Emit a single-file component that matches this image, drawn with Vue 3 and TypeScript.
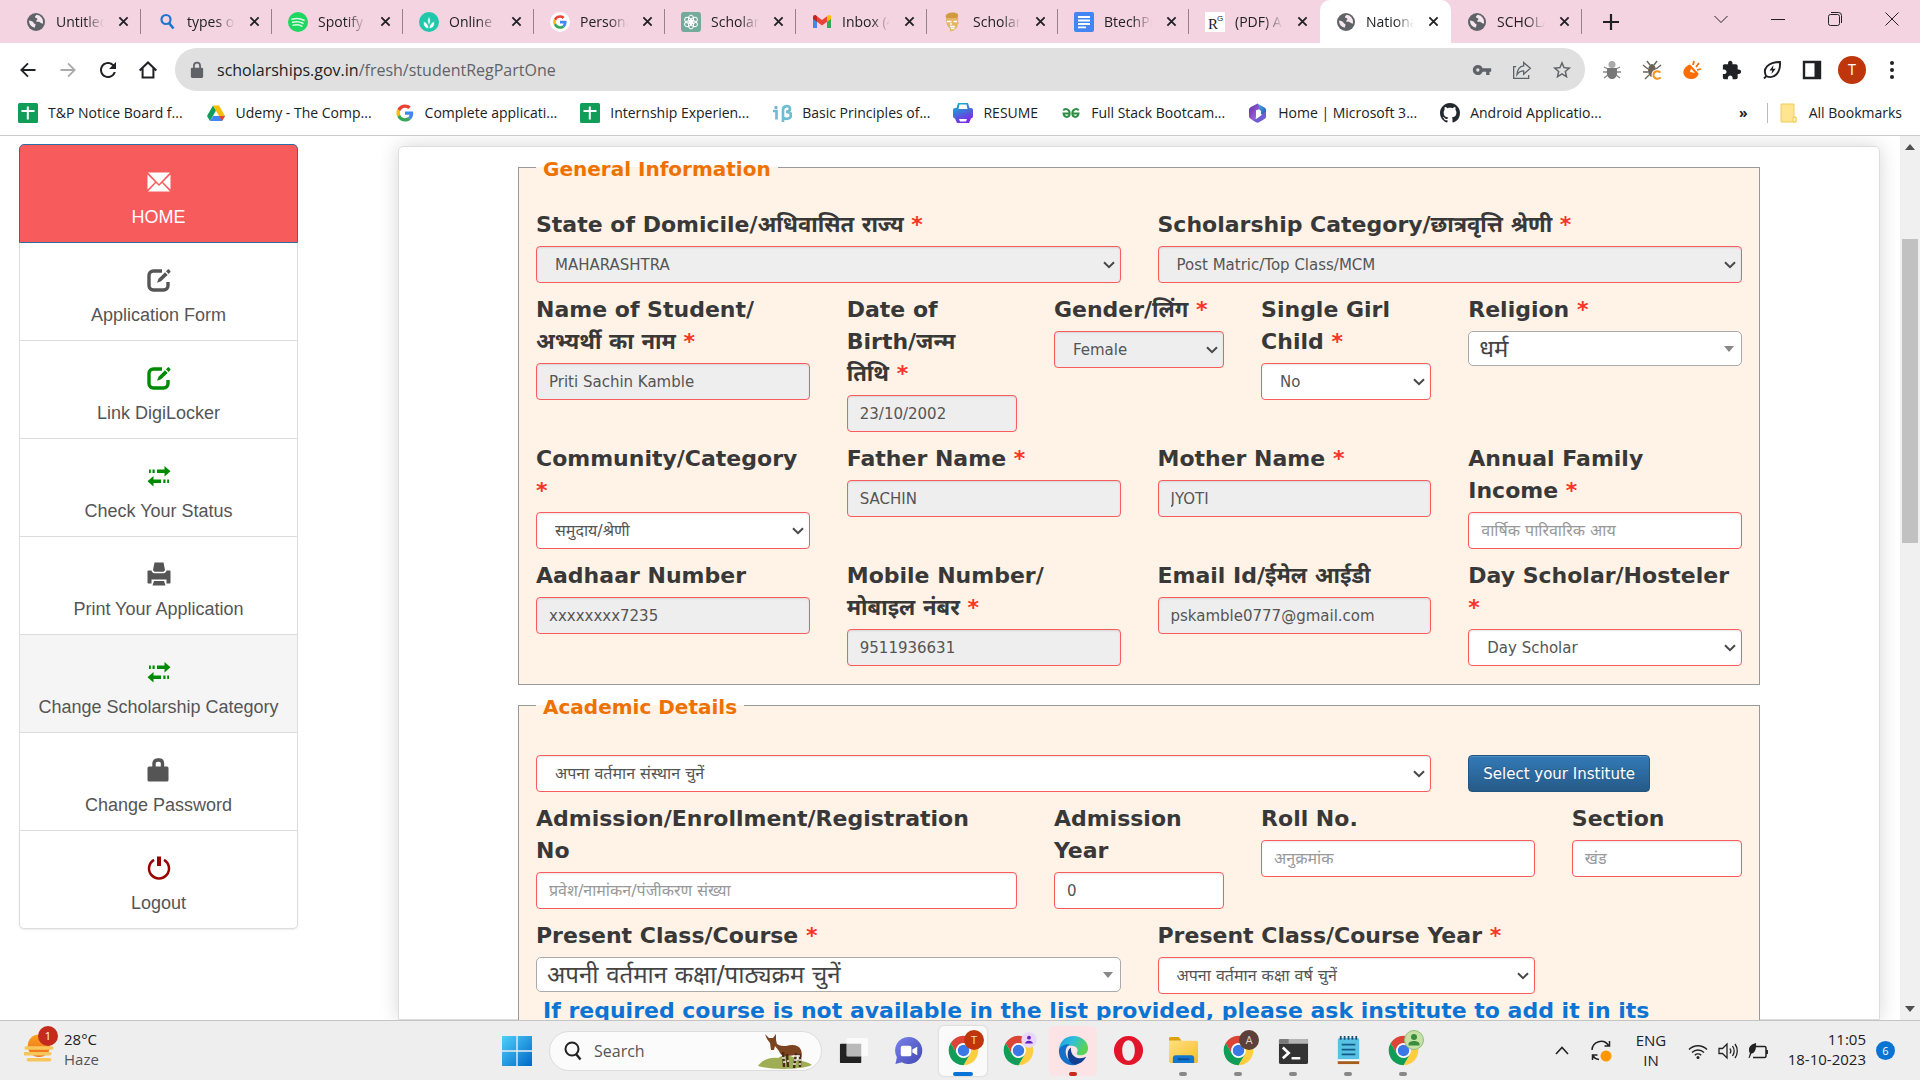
<script setup lang="ts">
interface Tab { title: string; icon: string; active?: boolean }
interface Shortcut { title: string; icon: string }
interface MenuItem { title: string; icon: string; tone: string }
interface Field {
  id: string
  label?: string
  kind: 'input' | 'select' | 'picker' | 'button'
  span: number
  value?: string
  hint?: string
  required?: boolean
  locked?: boolean
}
interface TaskApp { name: string; icon: string; state?: string; badge?: string }

const tabs: Tab[] = [
  { title: 'Untitled', icon: 'globe' },
  { title: 'types of', icon: 'lens' },
  { title: 'Spotify -', icon: 'spotify' },
  { title: 'Online C', icon: 'leafdot' },
  { title: 'Persona', icon: 'google-disc' },
  { title: 'Scholar', icon: 'gpt' },
  { title: 'Inbox (4', icon: 'gmail' },
  { title: 'Scholar', icon: 'sage' },
  { title: 'BtechPr', icon: 'docs' },
  { title: '(PDF) A', icon: 'rg' },
  { title: 'Nationa', icon: 'globe', active: true },
  { title: 'SCHOLA', icon: 'globe' },
]

const shortcuts: Shortcut[] = [
  { title: 'T&P Notice Board f...', icon: 'sheets' },
  { title: 'Udemy - The Comp...', icon: 'drive' },
  { title: 'Complete applicati...', icon: 'google' },
  { title: 'Internship Experien...', icon: 'sheets' },
  { title: 'Basic Principles of...', icon: 'beta' },
  { title: 'RESUME', icon: 'resume' },
  { title: 'Full Stack Bootcam...', icon: 'gfg' },
  { title: 'Home | Microsoft 3...', icon: 'm365' },
  { title: 'Android Applicatio...', icon: 'github' },
]

const extensions: string[] = ['bug', 'beetle', 'plug', 'puzzle', 'saver', 'panel']

const menu: MenuItem[] = [
  { title: 'HOME', icon: 'envelope', tone: 'home' },
  { title: 'Application Form', icon: 'edit', tone: 'grey' },
  { title: 'Link DigiLocker', icon: 'edit', tone: 'green' },
  { title: 'Check Your Status', icon: 'transfer', tone: 'green' },
  { title: 'Print Your Application', icon: 'print', tone: 'grey' },
  { title: 'Change Scholarship Category', icon: 'transfer', tone: 'green hovered' },
  { title: 'Change Password', icon: 'padlock', tone: 'grey' },
  { title: 'Logout', icon: 'power', tone: 'dark-red' },
]

const generalRows: Field[][] = [
  [
    { id: 'state', label: 'State of Domicile/अधिवासित राज्य', kind: 'select', span: 6, value: 'MAHARASHTRA', required: true, locked: true },
    { id: 'scheme', label: 'Scholarship Category/छात्रवृत्ति श्रेणी', kind: 'select', span: 6, value: 'Post Matric/Top Class/MCM', required: true, locked: true },
  ],
  [
    { id: 'student', label: 'Name of Student/\nअभ्यर्थी का नाम', kind: 'input', span: 3, value: 'Priti Sachin Kamble', required: true, locked: true },
    { id: 'dob', label: 'Date of\nBirth/जन्म\nतिथि', kind: 'input', span: 2, value: '23/10/2002', required: true, locked: true },
    { id: 'gender', label: 'Gender/लिंग', kind: 'select', span: 2, value: 'Female', required: true, locked: true },
    { id: 'girl', label: 'Single Girl\nChild', kind: 'select', span: 2, value: 'No', required: true },
    { id: 'religion', label: 'Religion', kind: 'picker', span: 3, value: 'धर्म', required: true },
  ],
  [
    { id: 'community', label: 'Community/Category', kind: 'select', span: 3, value: 'समुदाय/श्रेणी', required: true },
    { id: 'father', label: 'Father Name', kind: 'input', span: 3, value: 'SACHIN', required: true, locked: true },
    { id: 'mother', label: 'Mother Name', kind: 'input', span: 3, value: 'JYOTI', required: true, locked: true },
    { id: 'income', label: 'Annual Family\nIncome', kind: 'input', span: 3, hint: 'वार्षिक पारिवारिक आय', required: true },
  ],
  [
    { id: 'aadhaar', label: 'Aadhaar Number', kind: 'input', span: 3, value: 'xxxxxxxx7235', locked: true },
    { id: 'mobile', label: 'Mobile Number/\nमोबाइल नंबर', kind: 'input', span: 3, value: '9511936631', required: true, locked: true },
    { id: 'email', label: 'Email Id/ईमेल आईडी', kind: 'input', span: 3, value: 'pskamble0777@gmail.com', locked: true },
    { id: 'stay', label: 'Day Scholar/Hosteler', kind: 'select', span: 3, value: 'Day Scholar', required: true },
  ],
]

const academicRows: Field[][] = [
  [
    { id: 'institute', kind: 'select', span: 9, value: 'अपना वर्तमान संस्थान चुनें' },
    { id: 'pick', kind: 'button', span: 3, value: 'Select your Institute' },
  ],
  [
    { id: 'admission', label: 'Admission/Enrollment/Registration\nNo', kind: 'input', span: 5, hint: 'प्रवेश/नामांकन/पंजीकरण संख्या' },
    { id: 'year', label: 'Admission\nYear', kind: 'input', span: 2, value: '0' },
    { id: 'roll', label: 'Roll No.', kind: 'input', span: 3, hint: 'अनुक्रमांक' },
    { id: 'section', label: 'Section', kind: 'input', span: 2, hint: 'खंड' },
  ],
  [
    { id: 'course', label: 'Present Class/Course', kind: 'picker', span: 6, value: 'अपनी वर्तमान कक्षा/पाठ्यक्रम चुनें', required: true },
    { id: 'courseyear', label: 'Present Class/Course Year', kind: 'select', span: 4, value: 'अपना वर्तमान कक्षा वर्ष चुनें', required: true },
  ],
]

const sections = [
  { title: 'General Information', name: 'general', rows: generalRows, note: '' },
  { title: 'Academic Details', name: 'academic', rows: academicRows, note: 'If required course is not available in the list provided, please ask institute to add it in its' },
]

const isHindi = (f: Field): boolean => /[\u0900-\u097f]/.test((f.value ?? '') + (f.hint ?? ''))

const apps: TaskApp[] = [
  { name: 'Task view', icon: 'taskview' },
  { name: 'Chat', icon: 'chat' },
  { name: 'Chrome', icon: 'chrome', state: 'current', badge: 'badge-t' },
  { name: 'Chrome', icon: 'chrome', badge: 'badge-p' },
  { name: 'Edge', icon: 'edge', state: 'alert' },
  { name: 'Opera', icon: 'opera' },
  { name: 'Explorer', icon: 'explorer', state: 'open' },
  { name: 'Chrome', icon: 'chrome', state: 'open', badge: 'badge-a' },
  { name: 'Terminal', icon: 'terminal', state: 'open' },
  { name: 'Notepad', icon: 'notepad', state: 'open' },
  { name: 'Chrome', icon: 'chrome', state: 'open', badge: 'badge-g' },
]
</script>

<template>
  <div class="desktop">
    <svg class="sprite" aria-hidden="true">
      <defs>
        <linearGradient id="g-resume" x1="0" y1="0" x2="0.4" y2="1"><stop offset="0" stop-color="#00c4cc" /><stop offset="1" stop-color="#7d2ae8" /></linearGradient>
        <linearGradient id="g-m1" x1="0" y1="0" x2="1" y2="1"><stop offset="0" stop-color="#5b2ea6" /><stop offset="1" stop-color="#b977e8" /></linearGradient>
        <linearGradient id="g-m2" x1="0" y1="0" x2="1" y2="1"><stop offset="0" stop-color="#4fc3f7" /><stop offset="1" stop-color="#2848a8" /></linearGradient>
        <linearGradient id="g-win" x1="0" y1="0" x2="1" y2="1"><stop offset="0" stop-color="#4fd0fb" /><stop offset="1" stop-color="#0067c6" /></linearGradient>
        <linearGradient id="g-chat" x1="0" y1="0" x2="1" y2="1"><stop offset="0" stop-color="#7b83eb" /><stop offset="1" stop-color="#4147b5" /></linearGradient>
        <linearGradient id="g-edge" x1="0" y1="0" x2="1" y2="0.4"><stop offset="0" stop-color="#1b9de2" /><stop offset="0.5" stop-color="#30bfd8" /><stop offset="1" stop-color="#5bd352" /></linearGradient>
        <linearGradient id="g-sun" x1="0" y1="0" x2="0" y2="1"><stop offset="0" stop-color="#f9a11b" /><stop offset="1" stop-color="#ee6b1c" /></linearGradient>
        <linearGradient id="g-folder" x1="0" y1="0" x2="1" y2="1"><stop offset="0" stop-color="#ffe083" /><stop offset="1" stop-color="#f8bd26" /></linearGradient>
      </defs>
      <symbol id="globe" viewBox="0 0 20 20"><circle cx="10" cy="10" r="9" fill="#5f6368" /><path d="M3 8.500c2 .2 4 .8 4.500 2.200.3 1 1.700.8 2 1.800.3 1.300-.8 1.700-.7 3.200A7.300 7.300 0 0 1 3 8.500zM10.500 2.800c-.3 1-1.500 1-1.500 2.200 0 1.300 2.200.6 2.400 1.900.2 1.100-1.600 1.300-1.200 2.400.4 1 2 .2 3.300.7 1.400.5 1.300 1.700 3.600 1.400A7.300 7.300 0 0 0 10.500 2.800z" fill="#f6e6ee" /></symbol>
      <symbol id="lens" viewBox="0 0 20 20"><circle cx="9" cy="7.500" r="4.500" fill="none" stroke="#1976d2" stroke-width="2.200" /><path d="M12 11l4.500 5.500" stroke="#1976d2" stroke-width="2.600" /></symbol>
      <symbol id="spotify" viewBox="0 0 20 20"><circle cx="10" cy="10" r="10" fill="#1ed760" /><path d="M4 7.200c4-1.200 8.600-.8 12 1.100M4.600 10.300c3.600-1 7.300-.6 10.300 1M5.200 13.200c3-.8 6-.5 8.600.9" fill="none" stroke="#dff5e6" stroke-width="1.600" stroke-linecap="round" /></symbol>
      <symbol id="leafdot" viewBox="0 0 20 20"><circle cx="10" cy="10" r="10" fill="#1fc8aa" /><path d="M10 16.500c-4 0-6-3-5.500-7 3 .7 5 3 5.500 7zm0 0c4 0 6-3 5.500-7-3 .7-5 3-5.500 7zM10 13.500c-1.800-3.500-1.800-6 0-9 1.800 3 1.800 5.500 0 9z" fill="#fff" stroke="#1fc8aa" stroke-width=".7" /></symbol>
      <symbol id="google" viewBox="-4 -4 56 56"><path fill="#EA4335" d="M24 9.500c3.540 0 6.710 1.220 9.210 3.600l6.850-6.850C35.900 2.380 30.470 0 24 0 14.620 0 6.510 5.380 2.560 13.220l7.980 6.190C12.430 13.720 17.740 9.500 24 9.500z" /><path fill="#4285F4" d="M46.980 24.550c0-1.570-.15-3.090-.38-4.550H24v9.020h12.940c-.58 2.960-2.260 5.480-4.780 7.180l7.730 6c4.510-4.180 7.090-10.360 7.090-17.650z" /><path fill="#FBBC05" d="M10.530 28.590c-.48-1.450-.76-2.990-.76-4.590s.27-3.140.76-4.590l-7.980-6.190C.92 16.460 0 20.120 0 24c0 3.880.92 7.540 2.560 10.780l7.970-6.190z" /><path fill="#34A853" d="M24 48c6.480 0 11.930-2.130 15.890-5.810l-7.730-6c-2.150 1.450-4.920 2.300-8.160 2.300-6.260 0-11.570-4.220-13.470-9.910l-7.980 6.190C6.510 42.620 14.620 48 24 48z" /></symbol>
      <symbol id="google-disc" viewBox="0 0 20 20"><circle cx="10" cy="10" r="10" fill="#fff" /><use href="#google" x="2" y="2" width="16" height="16" /></symbol>
      <symbol id="gpt" viewBox="0 0 20 20"><rect width="20" height="20" rx="3" fill="#74aa9c" /><g fill="none" stroke="#fff" stroke-width="1"><ellipse cx="10" cy="7" rx="2.600" ry="4" /><ellipse cx="10" cy="7" rx="2.600" ry="4" transform="rotate(60 10 10)" /><ellipse cx="10" cy="7" rx="2.600" ry="4" transform="rotate(120 10 10)" /><ellipse cx="10" cy="7" rx="2.600" ry="4" transform="rotate(180 10 10)" /><ellipse cx="10" cy="7" rx="2.600" ry="4" transform="rotate(240 10 10)" /><ellipse cx="10" cy="7" rx="2.600" ry="4" transform="rotate(300 10 10)" /></g></symbol>
      <symbol id="gmail" viewBox="0 0 20 20"><path d="M1 5v11h4V8.800z" fill="#4285f4" /><path d="M19 5v11h-4V8.800z" fill="#34a853" /><path d="M15 4.500v5.300L19 7V5c0-2-2-2.600-3.200-1.600z" fill="#fbbc04" /><path d="M5 9.800V4.200L10 8l5-3.800v5.600L10 13.500z" fill="#ea4335" /><path d="M1 5v2l4 2.800V4.200l-.8-.8C3 2.400 1 3 1 5z" fill="#c5221f" /></symbol>
      <symbol id="sage" viewBox="0 0 20 20"><path d="M2.500 4.500C3 1.500 8 0 12 .8c3 .6 3.500 2 3 3.700L14.500 6H3.500z" fill="#d19a3e" /><path d="M3 6h12.500l-.5 3 .8 3-1.300.5c.5 2-.5 3.500-2 4.500-2 2-4 2.500-6 2 1-1 .6-2 0-3-2-1-3.500-4-3.500-10z" fill="#e3b565" /><path d="M4 9.500h4.500M10.500 9.500H14M8 11v2M7 14.500h5M8 16.500h3.500" stroke="#fff" stroke-width="1.400" /></symbol>
      <symbol id="docs" viewBox="0 0 20 20"><rect width="20" height="20" rx="2" fill="#4285f4" /><path d="M4 5h12M4 8.500h12M4 12h12M4 15.300h8" stroke="#fff" stroke-width="1.800" /></symbol>
      <symbol id="rg" viewBox="0 0 20 20"><rect width="20" height="20" fill="#fff" /><text x="3" y="17" font-family="Liberation Serif, serif" font-size="15" fill="#222">R</text><text x="12" y="9" font-family="Liberation Sans, sans-serif" font-size="8" fill="#222">G</text></symbol>
      <symbol id="sheets" viewBox="0 0 20 20"><rect width="20" height="20" rx="1.500" fill="#0f9d58" /><path d="M9.800 3.500v13M3.500 8h13" stroke="#fff" stroke-width="2" /></symbol>
      <symbol id="drive" viewBox="0 0 20 20"><path d="M7 2.500L1 13l3 5 6-10.500z" fill="#0f9d58" /><path d="M7 2.500h6L19 13h-6z" fill="#fbbc04" /><path d="M7.200 13H19l-3 5H4z" fill="#4285f4" /><path d="M13 13h6l-3 5z" fill="#ea4335" /></symbol>
      <symbol id="beta" viewBox="0 0 20 20"><path d="M1 8h3.500v8.500M11 19V7c0-5 7-5 7-1.200 0 2-1.500 3-4 3 3.500 0 5 1.200 5 3.500 0 4-6 4.500-8 2" fill="none" stroke="#6fbcd3" stroke-width="2.700" /><circle cx="4" cy="4.500" r="1.700" fill="#6fbcd3" /></symbol>
      <symbol id="resume" viewBox="0 0 20 20"><path d="M5 0h10l1.500 5H18a2 2 0 0 1 2 2v6a2.500 2.500 0 0 1-2 2.500L16 20H4l-2-4.500A2.500 2.500 0 0 1 0 13V7a2 2 0 0 1 2-2h1.500z" fill="url(#g-resume)" /><path d="M6.500 1.500h7l1 4.500h-9zM6 16h8l-1 2.500H7z" fill="#fff" /></symbol>
      <symbol id="gfg" viewBox="0 0 20 20"><path d="M9 10.500H2.500C3 15 8.500 15 8.700 10.500 8.700 6 4 5 2.300 7.500M11 10.500h6.500c-.5 4.500-6 4.500-6.200 0C11.300 6 16 5 17.700 7.500" fill="none" stroke="#2f8d46" stroke-width="2" /></symbol>
      <symbol id="m365" viewBox="0 0 20 20"><path d="M9.500.5l7 4c1 .6 1.500 1.500 1.500 2.500v7l-6-3.500V8.500L7 5.500z" fill="url(#g-m2)" /><path d="M9.500.5L3 4C1.800 4.700 1 5.800 1 7v6c0 1.500 1 2.500 2.200 3.200L7.500 18 8 13.500V7.500l4-2.500z" fill="url(#g-m1)" /><path d="M18 8v5.500c0 1-.5 2-1.500 2.500L11 19.300c-1 .6-2 .6-3 0l-4.500-2.800c3 .3 5-.5 6.500-1.700l3-2.300z" fill="#6d5fd0" /><path d="M8 8l3-1.800L13 8v3.500L10.500 13 8 12z" fill="#fff" /></symbol>
      <symbol id="github" viewBox="0 0 16 16"><path fill="#24292f" d="M8 0C3.580 0 0 3.580 0 8c0 3.540 2.290 6.530 5.470 7.590.4.070.55-.17.55-.38 0-.19-.01-.82-.01-1.490-2.010.37-2.530-.49-2.690-.94-.09-.23-.48-.94-.82-1.130-.28-.15-.68-.52-.01-.53.63-.01 1.080.58 1.230.82.72 1.210 1.870.87 2.330.66.070-.52.28-.87.51-1.070-1.780-.2-3.640-.89-3.640-3.950 0-.87.31-1.590.82-2.150-.08-.2-.36-1.020.08-2.120 0 0 .67-.21 2.200.82.64-.18 1.320-.27 2-.27s1.360.09 2 .27c1.530-1.040 2.200-.82 2.200-.82.44 1.100.16 1.920.08 2.120.51.56.82 1.270.82 2.150 0 3.070-1.870 3.750-3.650 3.950.29.25.54.73.54 1.480 0 1.070-.01 1.930-.01 2.200 0 .21.15.46.55.38A8.010 8.010 0 0 0 16 8c0-4.420-3.580-8-8-8z" /></symbol>
      <symbol id="yellow-folder" viewBox="0 0 20 20"><path d="M2 1h13v13h2v5H2z" fill="#ffe58f" stroke="#f0cd55" /><path d="M14 14.500h3v4.500h-3z" fill="#fff3c4" stroke="#f0cd55" /></symbol>

      <symbol id="back" viewBox="0 0 24 24"><path d="M21 12H4.500M12 4l-8 8 8 8" fill="none" stroke="currentColor" stroke-width="2.200" /></symbol>
      <symbol id="forward" viewBox="0 0 24 24"><path d="M3 12h16.500M12 4l8 8-8 8" fill="none" stroke="currentColor" stroke-width="2.200" /></symbol>
      <symbol id="reload" viewBox="2 2 20 20"><path fill="currentColor" d="M17.650 6.350A7.958 7.958 0 0 0 12 4c-4.420 0-7.990 3.580-7.990 8s3.570 8 7.990 8c3.730 0 6.840-2.550 7.730-6h-2.080A5.990 5.990 0 0 1 12 18c-3.310 0-6-2.690-6-6s2.690-6 6-6c1.660 0 3.140.69 4.220 1.780L13 11h7V4l-2.350 2.350z" /></symbol>
      <symbol id="house" viewBox="0 0 24 24"><path d="M2 12.500L12 3l10 9.500M5.500 10v11h13V10" fill="none" stroke="currentColor" stroke-width="2.400" /></symbol>
      <symbol id="lock" viewBox="0 0 16 20"><path d="M4.500 8V5a3.500 3.500 0 0 1 7 0v3" fill="none" stroke="#5f6368" stroke-width="2" /><rect x="1" y="7.500" width="14" height="11.500" rx="1.500" fill="#5f6368" /></symbol>
      <symbol id="key" viewBox="0 0 24 24"><path fill="#5f6368" fill-rule="evenodd" d="M12.650 10A5.990 5.990 0 0 0 7 6c-3.310 0-6 2.690-6 6s2.690 6 6 6a5.990 5.990 0 0 0 5.650-4H17v4h4v-4h2v-4H12.650zM7 14a2 2 0 1 1 0-4 2 2 0 0 1 0 4z" /></symbol>
      <symbol id="share" viewBox="0 0 24 24"><path d="M5 8H2v14h18v-4M14 3l8 7-8 7v-4c-4 0-6 1.500-8 4.500C6.500 11 9 7.500 14 7z" fill="none" stroke="#5f6368" stroke-width="1.600" /></symbol>
      <symbol id="star" viewBox="1 1 22 22"><path fill="#5f6368" d="M22 9.240l-7.190-.62L12 2 9.190 8.630 2 9.240l5.460 4.730L5.820 21 12 17.270 18.180 21l-1.630-7.030L22 9.240zM12 15.400l-3.760 2.270 1-4.280-3.320-2.880 4.380-.38L12 6.100l1.710 4.040 4.380.38-3.320 2.880 1 4.280L12 15.400z" /></symbol>
      <symbol id="bug" viewBox="0 0 20 20"><path d="M2 7l4 2M1 12h5M2 18l4-3M18 7l-4 2M19 12h-5M18 18l-4-3" stroke="#888" stroke-width="1.300" /><circle cx="10" cy="4.500" r="3.500" fill="#aaa" /><path d="M5 8h10v5c0 8-10 8-10 0z" fill="#777" /></symbol>
      <symbol id="beetle" viewBox="0 0 20 20"><path d="M5 1l3 4M15 1l-3 4M1 5l5 4M19 5l-5 4M1 12h5M3 19l4-4" stroke="#6b6258" stroke-width="1.400" fill="none" /><ellipse cx="10" cy="10.500" rx="4" ry="6.500" fill="#6b6258" /><path d="M18.500 12.500c-3.500-2.500-7-1-7 2.500s4 5 7.300 2.500" fill="none" stroke="#fff" stroke-width="4" /><path d="M18.500 12.500c-3.500-2.500-7-1-7 2.500s4 5 7.300 2.500" fill="none" stroke="#f7931e" stroke-width="2" /></symbol>
      <symbol id="plug" viewBox="0 0 20 20"><path d="M3 8c-4 5 0 11 6 11 4 0 7-2 7.500-5.500L8 4.500C6 5 4.500 6 3 8z" fill="#ff6c00" /><path d="M9 8.500l4 4.500-5-1z" fill="#fff" /><path d="M11 5l1-4M14 7l3-4M15 10l4-1" stroke="#ff6c00" stroke-width="1.800" /></symbol>
      <symbol id="puzzle" viewBox="1 0 23 23"><path fill="#202124" d="M20.500 11H19V7c0-1.100-.9-2-2-2h-4V3.500C13 2.120 11.880 1 10.500 1S8 2.120 8 3.500V5H4c-1.100 0-1.990.9-1.990 2v3.800H3.500c1.490 0 2.700 1.210 2.700 2.700s-1.210 2.700-2.700 2.700H2V20c0 1.100.9 2 2 2h3.800v-1.500c0-1.490 1.210-2.700 2.700-2.700 1.490 0 2.700 1.210 2.700 2.700V22H17c1.100 0 2-.9 2-2v-4h1.500c1.380 0 2.500-1.120 2.500-2.500S21.880 11 20.500 11z" /></symbol>
      <symbol id="saver" viewBox="0 0 20 20"><path d="M2 18.500l2.300-2.300C0 9 6 2 18 2c.7 11-6 17.500-13.700 14.200" fill="none" stroke="#202124" stroke-width="1.900" /><path d="M11.500 5l-4 5.500h2.700L9.500 14l4.300-5.300h-2.900z" fill="#202124" /></symbol>
      <symbol id="panel" viewBox="0 0 20 20"><path d="M2 2h16v16H2z" fill="none" stroke="#202124" stroke-width="2.400" /><path d="M12.500 2H18v16h-5.500z" fill="#202124" /></symbol>

      <symbol id="envelope" viewBox="0 0 24 24"><path d="M1 2.500h22L12 14zM.5 4.500L8 12 .5 19.500zM23.500 4.500L16 12l7.500 7.500zM1 21.500l8-8.500 3 3 3-3 8 8.500z" fill="currentColor" /></symbol>
      <symbol id="edit" viewBox="0 0 24 24"><path d="M15 3H6.500A4.500 4.500 0 0 0 2 7.500v10A4.500 4.500 0 0 0 6.500 22h10a4.500 4.500 0 0 0 4.500-4.500V14" fill="none" stroke="currentColor" stroke-width="3.400" /><path d="M10 14.800l1.500-4L18 4.300l2.700 2.600L14 13.300zM19 3.300l1.600-1.600c.5-.5 1.100-.5 1.600 0l1 1c.5.500.5 1.100 0 1.600L21.600 5.900z" fill="currentColor" /></symbol>
      <symbol id="transfer" viewBox="0 0 24 24"><path d="M2 5.500h1.800v3.500H2zM5.500 5.500h2.200v3.500H5.500zM10 5.500h7.500V2l6 5.200-6 5.300V9H10zM22 15.500h-1.800v3.500H22zM18.500 15.500h-2.200v3.500h2.200zM14 15.500H6.500V12l-6 5.200 6 5.300V19H14z" fill="currentColor" /></symbol>
      <symbol id="print" viewBox="0 0 24 24"><path d="M7.500.5h9l1.500 7.500a3 3 0 0 1-1.500 1.700h-9A3 3 0 0 1 6 8zM1.500 8.500h3c.5 1.800 1.500 2.800 3 2.800h9c1.500 0 2.500-1 3-2.800h3c.5 0 1 .4 1 1v11c0 .6-.4 1-1 1h-3v-4h-15v4h-3c-.6 0-1-.4-1-1v-11c0-.6.4-1 1-1zM7 19h10l1.500 4.500h-13z" fill="currentColor" /></symbol>
      <symbol id="padlock" viewBox="0 0 24 24"><path d="M7 9V5.500c0-2 1.200-3.500 3.500-3.500h1.500c2.300 0 3.500 1.500 3.500 3.500V9" fill="none" stroke="currentColor" stroke-width="3.400" /><rect x=".5" y="8.500" width="21" height="15" rx="1.500" fill="currentColor" /></symbol>
      <symbol id="power" viewBox="0 0 24 24"><path d="M7 3.800a10 10 0 1 0 10 0" fill="none" stroke="currentColor" stroke-width="2.500" /><path d="M10 .5h4V10h-4z" fill="currentColor" /></symbol>
      <symbol id="caret" viewBox="0 0 12 8"><path d="M1 1.200l5 5 5-5" fill="none" stroke="currentColor" stroke-width="2" /></symbol>

      <symbol id="windows" viewBox="0 0 30 30"><path d="M0 0h14.300v14.300H0zM15.700 0H30v14.300H15.700zM0 15.700h14.300V30H0zM15.700 15.700H30V30H15.700z" fill="url(#g-win)" /></symbol>
      <symbol id="taskview" viewBox="0 0 32 32"><rect x="2" y="9" width="22" height="20" rx="1" fill="#222" /><rect x="9" y="3" width="22" height="19" rx="1" fill="#fafafa" /><rect x="9" y="9" width="15" height="13" fill="#b9b9b9" /></symbol>
      <symbol id="chat" viewBox="0 0 32 32"><path d="M16 2a14 14 0 1 1-7 26l-6.500 2L4 23A14 14 0 0 1 16 2z" fill="url(#g-chat)" /><rect x="8" y="11" width="11" height="11" rx="2" fill="#fff" /><path d="M20 15l5-3v9l-5-3z" fill="#fff" /></symbol>
      <symbol id="chrome" viewBox="1 1 46 46"><path d="M4.950 13A22 22 0 0 1 43.050 13H24A11 11 0 0 0 14.470 29.500z" fill="#db4437" /><path d="M43.050 13A22 22 0 0 1 24 46L33.530 29.500A11 11 0 0 0 24 13z" fill="#ffcd40" /><path d="M24 46A22 22 0 0 1 4.950 13L14.470 29.500A11 11 0 0 0 33.530 29.500z" fill="#0f9d58" /><circle cx="24" cy="24" r="10.500" fill="#fff" /><circle cx="24" cy="24" r="8.500" fill="#3b78e7" /></symbol>
      <symbol id="edge" viewBox="0 0 32 32"><path d="M1 15C2 6 8 1 16 1c8.500 0 15 6 15 12.500 0 5-3.500 7.500-7.500 7.500-3 0-5-1.200-4-2.700 2-3 0-7.300-5.500-7.300C8 11 3 13 1 15z" fill="url(#g-edge)" /><path d="M1 15c2.500-4.500 7-5.800 11-5.300-3 2-4.500 5-4 9 .6 6 5.500 9.300 10 10.300l2 1.500C10 33.500 0 26 1 15z" fill="#1470c8" /><path d="M10 20c0-3 1-5.500 3.500-7-1 5 2.500 11 9 11 3 0 5-.8 6.500-1.500C26.500 27.500 22 30.500 17 30.500c-4.500-2-7-5.500-7-10.500z" fill="#123f92" /></symbol>
      <symbol id="opera" viewBox="0 0 32 32"><path fill-rule="evenodd" d="M16 1a15 15 0 1 0 0 30 15 15 0 0 0 0-30zm0 4.500c4 0 6.500 4.500 6.500 10.500S20 26.500 16 26.500 9.500 22 9.500 16 12 5.500 16 5.500z" fill="#e3152a" /></symbol>
      <symbol id="explorer" viewBox="0 0 32 32"><path d="M1 4c0-1 .6-2 2-2h8l3 4h-13z" fill="#e0a100" /><path d="M1 6h28c1.200 0 2 .8 2 2v19c0 1-.8 2-2 2H3c-1.200 0-2-1-2-2z" fill="url(#g-folder)" /><path d="M5 29v-5c0-2 1-3 3-3h16c2 0 3 1 3 3v5z" fill="#1177d1" /><path d="M10 25h12" stroke="#0a4f95" stroke-width="2" /></symbol>
      <symbol id="terminal" viewBox="0 0 32 32"><rect x="1" y="4" width="30" height="26" rx="2" fill="#333" /><path d="M1 9V6c0-1.200.8-2 2-2h26c1.200 0 2 .8 2 2v3z" fill="#b5b5b5" /><path d="M1 9V6c0-1.200.8-2 2-2h8v5z" fill="#7a7a7a" /><path d="M5 13l6 5.500L5 24" fill="none" stroke="#fff" stroke-width="2.800" /><path d="M14 24h9" stroke="#fff" stroke-width="2.500" /></symbol>
      <symbol id="notepad" viewBox="0 0 32 32"><rect x="5" y="3" width="22" height="27" rx="2" fill="#57c1e6" /><path d="M5 27h22v3H5z" fill="#a85d19" /><path d="M5 25h22v2H5z" fill="#fff" /><path d="M8 1v4M12 1v4M16 1v4M20 1v4M24 1v4" stroke="#1d4d70" stroke-width="1.800" /><path d="M9 10h14M9 15h14M9 20h14" stroke="#125c87" stroke-width="1.800" /></symbol>
      <symbol id="badge-t" viewBox="0 0 20 20"><circle cx="10" cy="10" r="10" fill="#bf360c" /><text x="10" y="14" text-anchor="middle" font-family="Roboto, sans-serif" font-size="11" fill="#f6cfc2">T</text></symbol>
      <symbol id="badge-a" viewBox="0 0 20 20"><circle cx="10" cy="10" r="10" fill="#5d4037" /><text x="10" y="14" text-anchor="middle" font-family="Roboto, sans-serif" font-size="11" fill="#ddd0ca">A</text></symbol>
      <symbol id="badge-p" viewBox="-3 -3 26 26"><circle cx="10" cy="10" r="10" fill="#e6d7fb" /><circle cx="10" cy="7" r="2.500" fill="#6a1fc2" /><path d="M5 14.500c0-4.500 10-4.500 10 0z" fill="#6a1fc2" /></symbol>
      <symbol id="badge-g" viewBox="0 0 20 20"><circle cx="10" cy="10" r="9.500" fill="#c5e1a5" stroke="#8fbf7a" /><circle cx="10" cy="7" r="3" fill="#388e3c" /><path d="M4.500 15.500v-1.500c0-4 11-4 11 0v1.500z" fill="#388e3c" /></symbol>
    </svg>

    <header class="browser">
      <div class="tabstrip">
        <div v-for="(tab, i) in tabs" :key="i" class="tab" :class="{ active: tab.active, before: tabs[i + 1]?.active }">
          <svg class="ico20"><use :href="'#' + tab.icon" /></svg>
          <span class="tab-title">{{ tab.title }}</span>
          <button class="tab-close" aria-label="Close tab"><svg viewBox="0 0 12 12"><path d="M1.500 1.500l9 9M10.500 1.500l-9 9" stroke="#202124" stroke-width="2" /></svg></button>
        </div>
        <button class="new-tab" aria-label="New tab"><svg viewBox="0 0 16 16"><path d="M8 0v16M0 8h16" stroke="#202124" stroke-width="2.200" /></svg></button>
        <div class="window-controls">
          <button aria-label="Search tabs"><svg viewBox="0 0 14 14"><path d="M.5 4l6.500 6.500L13.500 4" fill="none" stroke="#222" /></svg></button>
          <button aria-label="Minimize"><svg viewBox="0 0 14 14"><path d="M0 7.500h14" stroke="#222" /></svg></button>
          <button aria-label="Restore"><svg viewBox="0 0 14 14"><rect x=".5" y="2.500" width="11" height="11" rx="2" fill="none" stroke="#222" /><path d="M3 .5h7.500a3 3 0 0 1 3 3V11" fill="none" stroke="#222" /></svg></button>
          <button aria-label="Close window"><svg viewBox="0 0 14 14"><path d="M.5.5l13 13M13.500.5l-13 13" stroke="#222" /></svg></button>
        </div>
      </div>

      <div class="toolbar">
        <nav class="nav-buttons">
          <button aria-label="Back"><svg class="ico20"><use href="#back" /></svg></button>
          <button aria-label="Forward" class="dim"><svg class="ico20"><use href="#forward" /></svg></button>
          <button aria-label="Reload"><svg class="ico20"><use href="#reload" /></svg></button>
          <button aria-label="Home"><svg class="ico20"><use href="#house" /></svg></button>
        </nav>
        <div class="omnibox">
          <svg class="lock"><use href="#lock" /></svg>
          <div class="url">scholarships.gov.in<span>/fresh/studentRegPartOne</span></div>
          <button aria-label="Passwords"><svg class="ico20"><use href="#key" /></svg></button>
          <button aria-label="Share"><svg class="ico20"><use href="#share" /></svg></button>
          <button aria-label="Bookmark"><svg class="ico20"><use href="#star" /></svg></button>
        </div>
        <div class="extensions">
          <button v-for="ext in extensions" :key="ext" :aria-label="ext"><svg class="ico20"><use :href="'#' + ext" /></svg></button>
          <button class="avatar" aria-label="Profile">T</button>
          <button aria-label="Menu"><svg class="ico20" viewBox="0 0 20 20"><g fill="#202124"><circle cx="10" cy="3" r="2" /><circle cx="10" cy="10" r="2" /><circle cx="10" cy="17" r="2" /></g></svg></button>
        </div>
      </div>

      <nav class="bookmarks">
        <a v-for="s in shortcuts" :key="s.title" href="#"><svg class="ico20"><use :href="'#' + s.icon" /></svg>{{ s.title }}</a>
        <span class="more">»</span>
        <a href="#" class="all"><svg class="ico20"><use href="#yellow-folder" /></svg>All Bookmarks</a>
      </nav>
    </header>

    <main class="page">
      <nav class="sidebar">
        <a v-for="m in menu" :key="m.title" href="#" :class="m.tone">
          <svg><use :href="'#' + m.icon" /></svg>
          <span>{{ m.title }}</span>
        </a>
      </nav>

      <form class="panel" @submit.prevent>
        <fieldset v-for="s in sections" :key="s.name" :class="s.name">
          <legend>{{ s.title }}</legend>
          <div v-for="(row, r) in s.rows" :key="r" class="row">
            <div v-for="f in row" :key="f.id" class="field" :class="['span-' + f.span, { hindi: isHindi(f) }]">
              <label v-if="f.label" :for="f.id">{{ f.label + ' ' }}<b v-if="f.required">*</b></label>
              <input v-if="f.kind === 'input'" :id="f.id" type="text" :value="f.value" :placeholder="f.hint" :disabled="f.locked">
              <button v-else-if="f.kind === 'button'" type="button" class="primary">{{ f.value }}</button>
              <div v-else class="choice" :class="f.kind">
                <select :id="f.id" :disabled="f.locked" :aria-label="f.label ?? 'Institute'"><option>{{ f.value }}</option></select>
                <svg v-if="f.kind === 'select'" class="caret"><use href="#caret" /></svg>
                <i v-else class="triangle"></i>
              </div>
            </div>
          </div>
          <p v-if="s.note" class="note">{{ s.note }}</p>
        </fieldset>
      </form>

      <div class="scrollbar" aria-hidden="true">
        <i class="up"></i>
        <div class="thumb"></div>
        <i class="down"></i>
      </div>
    </main>

    <footer class="taskbar">
      <div class="weather">
        <div class="weather-icon">
          <svg viewBox="0 0 28 28"><circle cx="14" cy="11" r="10.500" fill="url(#g-sun)" /><path d="M2 13h24M0 18.500h24M4 24h20" stroke="#f7c65b" stroke-width="3.200" stroke-linecap="round" /></svg>
          <b>1</b>
        </div>
        <div><div>28°C</div><div class="soft">Haze</div></div>
      </div>
      <button class="start" aria-label="Start"><svg><use href="#windows" /></svg></button>
      <label class="search">
        <svg class="glass" viewBox="0 0 20 20"><circle cx="10" cy="8" r="6.500" fill="none" stroke="#222" stroke-width="2" /><path d="M14 13l4.500 5.500" stroke="#222" stroke-width="2.400" /></svg>
        <input type="text" placeholder="Search" aria-label="Search">
        <svg class="okapi" viewBox="0 0 54 36"><path d="M0 33c4-6 12-9 20-8 6-4 14-3 20 2 4 1 10 2 14 5-12 5-40 5-54 1z" fill="#9fae54" /><path d="M7 1l4 4 4 0 3-4 0 6 1 4c3 2 6 2 9 2 7-2 13-1 15 4 1 3 1 6 0 9l-4-4-10 1c-5 0-7-2-8-5l-4-5-1 4-3 0-1-7-3-4z" fill="#7c4320" /><path d="M25 19l1 15M29 21l1 13M38 20l-2 15M42 21l0 13" stroke="#4a2a18" stroke-width="2.400" /><path d="M24 25h3M25 29h3M35 23h7M36 27h3M41 27h2M29 28h2M35 31h3M41 31h2" stroke="#eee" stroke-width="1.300" /></svg>
      </label>
      <div class="apps">
        <button v-for="(a, i) in apps" :key="i" :aria-label="a.name" :class="a.state">
          <svg class="app-icon"><use :href="'#' + a.icon" /></svg>
          <svg v-if="a.badge" class="app-badge"><use :href="'#' + a.badge" /></svg>
        </button>
      </div>
      <div class="tray">
        <svg class="ico18" viewBox="0 0 18 18"><path d="M3 12l6-6.500 6 6.500" fill="none" stroke="#222" stroke-width="1.600" /></svg>
        <svg class="sync" viewBox="0 0 22 22"><path d="M2 10a9 9 0 0 1 16.500-4.500M19.500 1v5h-5M2.500 20v-5h5M2.500 15.500A9 9 0 0 0 9 19.500" fill="none" stroke="#222" stroke-width="1.500" /><circle cx="16" cy="16" r="5.500" fill="#ff9800" /></svg>
        <div class="lang"><div>ENG</div><div>IN</div></div>
        <svg class="ico20" viewBox="0 0 20 20"><g fill="none" stroke="#222" stroke-width="1.500"><path d="M1 8.500a12.500 12.500 0 0 1 18 0M4 11.500a8.500 8.500 0 0 1 12 0M6.800 14.200a4.700 4.700 0 0 1 6.400 0" /></g><circle cx="10" cy="16.500" r="1.500" fill="#222" /></svg>
        <svg class="ico20" viewBox="0 0 20 20"><path d="M1 7.500h3.500L9 3v14l-4.500-4.500H1zM12 7.500c1 1.500 1 3.500 0 5M14.500 5c2 3 2 7 0 10M17 3c3 4 3 10 0 14" fill="none" stroke="#222" stroke-width="1.300" /></svg>
        <svg class="ico20" viewBox="0 0 20 20"><path d="M8 5.500h8.500c.8 0 1.500.7 1.500 1.500v8c0 .8-.7 1.500-1.500 1.500H5M19.200 9v4" fill="none" stroke="#222" stroke-width="1.500" /><path d="M1 9c0-4 3-6 7-7 .5 6-1 10-4.500 10.500L1.500 17H.5l1.500-5C1.300 11.500 1 10 1 9z" fill="#222" /></svg>
        <div class="clock"><div>11:05</div><div>18-10-2023</div></div>
        <span class="count">6</span>
      </div>
    </footer>
  </div>
</template>

<style>
html, body { margin: 0; background: #fff; }
</style>

<style scoped>
* { box-sizing: border-box; }
.desktop {
  display: flex;
  flex-direction: column;
  height: 100vh;
  overflow: hidden;
  background: #fff;
  color: #202124;
  font-family: "Open Sans", "Noto Sans", sans-serif;
  font-size: 14px;
}
button { padding: 0; border: 0; background: none; font: inherit; color: inherit; }
a { color: inherit; text-decoration: none; }
svg { display: block; flex: none; }
.sprite { position: absolute; width: 0; height: 0; }
.ico20 { width: 20px; height: 20px; }
.ico18 { width: 18px; height: 18px; }

.tabstrip { display: flex; height: 43px; padding-left: 10px; background: #f5d4e2; }
.tab {
  display: flex;
  align-items: center;
  flex: 0 1 131px;
  min-width: 0;
  padding: 0 9px 0 16px;
  position: relative;
}
.tab::after {
  content: "";
  position: absolute;
  right: 0;
  top: 9px;
  height: 25px;
  border-right: 1px solid #958189;
}
.tab.active { background: #fff; border-radius: 10px 10px 0 0; }
.tab.active::after, .tab.before::after { display: none; }
.tab-title {
  flex: 1;
  margin-left: 10px;
  overflow: hidden;
  white-space: nowrap;
  mask-image: linear-gradient(90deg, #000 60%, transparent);
}
.tab-close { display: grid; place-items: center; width: 18px; height: 18px; margin-left: 10px; }
.tab-close svg { width: 11px; height: 11px; }
.new-tab { width: 58px; display: grid; place-items: center; }
.new-tab svg { width: 16px; height: 16px; }
.window-controls { display: flex; margin-left: auto; }
.window-controls button { width: 57px; height: 38px; display: grid; place-items: center; }
.window-controls svg { width: 14px; height: 14px; }

.toolbar { display: flex; align-items: center; height: 53px; padding: 0 8px; }
.nav-buttons { display: flex; margin-right: 7px; }
.nav-buttons button, .extensions button, .omnibox button { display: grid; place-items: center; width: 40px; height: 40px; }
.nav-buttons .dim { color: #aaa; }
.omnibox {
  display: flex;
  align-items: center;
  flex: 1;
  height: 43px;
  padding: 0 3px 0 15px;
  border-radius: 22px;
  background: #e0e0e0;
}
.lock { width: 14px; height: 18px; }
.url { flex: 1; margin-left: 13px; font-size: 16px; }
.url span { color: #5f6368; }
.extensions { display: flex; align-items: center; margin-left: 7px; }
.extensions .avatar { width: 28px; height: 28px; margin: 0 6px; border-radius: 50%; background: #bf360c; color: #fff; font-family: Roboto, sans-serif; }

.bookmarks {
  display: flex;
  align-items: center;
  gap: 23px;
  height: 40px;
  padding: 0 18px 6px;
  border-bottom: 1px solid #ccc;
  white-space: nowrap;
}
.bookmarks a { display: flex; align-items: center; gap: 10px; }
.more { margin-left: auto; font-weight: 700; }
.bookmarks .all { margin-left: -4px; padding-left: 11px; border-left: 1px solid #bbb; }

.page { display: flex; flex: 1; min-height: 0; overflow: hidden; padding-left: 19px; }
.sidebar { display: flex; flex-direction: column; flex: 0 0 279px; margin-top: 8px; font-family: "Liberation Sans", Arial, sans-serif; font-size: 18px; color: #555; }
.sidebar a {
  display: flex;
  flex-direction: column;
  align-items: center;
  gap: 11px;
  height: 99px;
  margin-bottom: -1px;
  padding-top: 25px;
  border: 1px solid #ddd;
  background: #fff;
  flex: none;
}
.sidebar a svg { width: 24px; height: 24px; }
.sidebar a span { line-height: 24px; }
.sidebar a:first-child { border-radius: 5px 5px 0 0; }
.sidebar a:last-child { border-radius: 0 0 5px 5px; box-shadow: 0 1px 2px rgba(0, 0, 0, .08); }
.sidebar .home { position: relative; background: #f85b5b; border-color: #2e6da4; color: #fff; }
.sidebar .hovered { background: #f5f5f5; }
.sidebar .green svg { color: #008a00; }
.sidebar .dark-red svg { color: #9b0000; }

.panel {
  flex: 1;
  min-width: 0;
  margin: 10px 20px 0 100px;
  padding: 4px 119px 0;
  border: 1px solid #ddd;
  border-radius: 5px 5px 0 0;
  box-shadow: 0 0 20px rgba(0, 0, 0, .16);
  font-family: "DejaVu Sans", Verdana, "Noto Sans Devanagari", sans-serif;
}
fieldset { min-width: 0; margin: 0 0 4px; padding: 26px 17px 18px; border: 1px solid #999; background: #fff2e6; }
fieldset.academic { padding-top: 34px; }
legend { padding: 4px 7px 0; font-size: 20px; line-height: 28px; font-weight: 700; color: #ed7203; }
.row { display: grid; grid-template-columns: repeat(12, minmax(0, 1fr)); column-gap: 37px; align-items: start; }
.row + .row { margin-top: 11px; }
.span-2 { grid-column: span 2; }
.span-3 { grid-column: span 3; }
.span-4 { grid-column: span 4; }
.span-5 { grid-column: span 5; }
.span-6 { grid-column: span 6; }
.span-9 { grid-column: span 9; }
.field label { display: block; margin-bottom: 5px; font-size: 22px; line-height: 32px; font-weight: 700; color: #383838; white-space: pre-line; }
.field label b { color: #fa3427; }
.field input, .field select {
  display: block;
  width: 100%;
  height: 37px;
  margin: 0;
  padding: 0 12px;
  border: 1px solid #fa5c5c;
  border-radius: 4px;
  background: #fff;
  box-shadow: inset 0 1px 2px rgba(0, 0, 0, .1);
  color: #555;
  opacity: 1;
  font-family: inherit;
  font-size: 15px;
}
.field select { appearance: none; padding: 0 30px 0 18px; }
.hindi input, .hindi select { font-size: 16px; }
.field :disabled { background: #eee; }
.field input::placeholder { color: #999; }
.choice { display: grid; align-items: center; }
.choice > * { grid-area: 1 / 1; }
.caret { justify-self: end; width: 12px; height: 8px; margin-right: 6px; color: #484848; pointer-events: none; }
.choice.picker select { height: 35px; padding: 0 30px 0 10px; border-color: #aaa; border-radius: 5px; box-shadow: none; font-size: 24px; color: #444; }
.triangle { justify-self: end; margin-right: 8px; border: 5px solid transparent; border-top: 6px solid #888; border-bottom: 0; pointer-events: none; }
.primary {
  height: 37px;
  padding: 0 14px;
  border: 1px solid #245580;
  border-radius: 4px;
  background: linear-gradient(#337ab7, #265a88);
  box-shadow: inset 0 1px 0 rgba(255, 255, 255, .15);
  text-shadow: 0 -1px 0 rgba(0, 0, 0, .2);
  color: #fff;
  font-size: 15px;
}
.note { margin: 0; padding: 1px 0 0 7px; font-size: 22px; line-height: 32px; font-weight: 700; color: #0c74d4; white-space: nowrap; }

.scrollbar { display: flex; flex-direction: column; align-items: center; flex: 0 0 20px; padding: 8px 0; background: #f0f0f0; }
.thumb { width: 16px; height: 304px; margin-top: 89px; background: #c1c1c1; }
.up, .down { border: 5px solid transparent; }
.up { border-top: 0; border-bottom: 6px solid #505050; }
.down { margin-top: auto; border-bottom: 0; border-top: 6px solid #505050; }

.taskbar { display: flex; align-items: center; flex: 0 0 60px; padding-right: 25px; border-top: 1px solid #c4c4c4; background: #eee; font-size: 15px; line-height: 20px; }
.weather { display: flex; align-items: center; gap: 10px; width: 502px; padding: 0 0 4px 24px; }
.weather-icon { position: relative; }
.weather-icon svg { width: 30px; height: 30px; }
.weather-icon b { position: absolute; right: -4px; top: -8px; width: 20px; height: 20px; border-radius: 50%; background: #c42b1c; color: #fff; font-size: 11px; font-weight: 400; text-align: center; }
.soft { color: #555; }
.start svg { width: 30px; height: 30px; }
.search { display: flex; align-items: center; width: 273px; height: 40px; margin: 0 7px 0 17px; padding: 0 9px 0 12px; border: 1px solid #dcdcdc; border-radius: 20px; background: #fbfbfb; }
.glass { width: 20px; height: 20px; }
.search input { flex: 1; min-width: 0; margin-left: 12px; padding: 0; border: 0; background: none; font: inherit; font-size: 16px; }
.search input::placeholder { color: #555; }
.okapi { width: 54px; height: 36px; }
.apps { display: flex; gap: 7px; }
.apps button { position: relative; display: grid; place-items: center; width: 48px; height: 50px; border-radius: 5px; }
.apps .current { background: #fafafa; box-shadow: 0 0 2px #bbb; }
.apps .alert { background: #fce4e6; }
.app-icon { width: 31px; height: 31px; }
.app-badge { position: absolute; right: 3px; top: 4px; width: 20px; height: 20px; }
.apps .current::after, .apps .alert::after, .apps .open::after { content: ""; position: absolute; bottom: 0; width: 8px; height: 4px; border-radius: 2px; background: #888; }
.apps .current::after { width: 20px; background: #0a74d4; }
.apps .alert::after { background: #c42b1c; }
.tray { display: flex; align-items: center; gap: 10px; margin-left: auto; }
.sync { width: 22px; height: 22px; margin: 0 12px 0 9px; }
.lang { width: 34px; margin-right: 10px; padding-bottom: 2px; text-align: center; }
.clock { width: 88px; padding-bottom: 3px; text-align: right; }
.count { width: 19px; height: 19px; border-radius: 50%; background: #0a74d4; color: #fff; font-size: 11px; text-align: center; }
</style>
